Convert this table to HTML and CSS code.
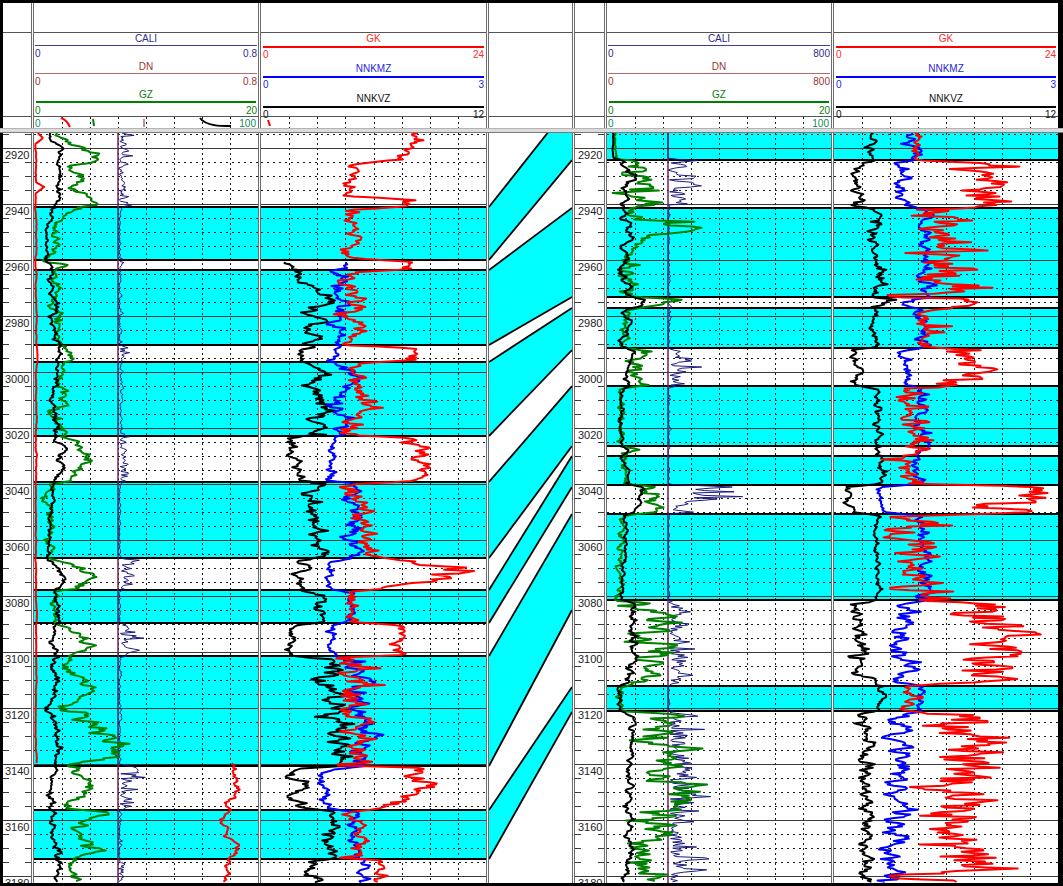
FILE: index.html
```html
<!DOCTYPE html>
<html lang="en">
<head>
<meta charset="utf-8">
<title>Well log correlation</title>
<link rel="stylesheet" href="styles.css">
</head>
<body>
<div class="page">
  <div class="edge"></div>

  <div class="pane head">
    <div class="col w-d1"><div class="r1"></div><div class="r2"></div><div class="r3"></div></div>
    <div class="sep"></div>

    <div class="col w-t1">
      <div class="r1"></div>
      <div class="r2">
        <div class="scale">
          <div class="name cali">CALI</div>
          <div class="bar bar-cali"></div>
          <div class="range cali"><span>0</span><span>0.8</span></div>
        </div>
        <div class="scale">
          <div class="name dn">DN</div>
          <div class="bar bar-dn"></div>
          <div class="range dn"><span>0</span><span>0.8</span></div>
        </div>
        <div class="scale">
          <div class="name gz">GZ</div>
          <div class="bar bar-gz thick"></div>
          <div class="range gz"><span>0</span><span>20</span></div>
        </div>
      </div>
      <div class="r3">
        <svg class="ruler" id="ru1" width="224" height="11"><text class="rl" x="1" y="9.5">0</text><text class="rl" x="222" y="9.5" text-anchor="end">100</text></svg>
      </div>
    </div>
    <div class="sep"></div>

    <div class="col w-t2">
      <div class="r1"></div>
      <div class="r2">
        <div class="scale tall">
          <div class="name gk">GK</div>
          <div class="bar bar-gk"></div>
          <div class="range gk"><span>0</span><span>24</span></div>
        </div>
        <div class="scale tall">
          <div class="name nnkmz">NNKMZ</div>
          <div class="bar bar-nnkmz"></div>
          <div class="range nnkmz"><span>0</span><span>3</span></div>
        </div>
        <div class="scale tall">
          <div class="name nnkvz">NNKVZ</div>
          <div class="bar bar-nnkvz"></div>
          <div class="range nnkvz"><span>0</span><span>12</span></div>
        </div>
      </div>
      <div class="r3">
        <svg class="ruler" id="ru2" width="225" height="11"></svg>
      </div>
    </div>
    <div class="sep"></div>

    <div class="col w-cr"><div class="r1"></div><div class="r2"></div><div class="r3"></div></div>
    <div class="sep"></div>

    <div class="col w-d2"><div class="r1"></div><div class="r2"></div><div class="r3"></div></div>
    <div class="sep"></div>

    <div class="col w-t3">
      <div class="r1"></div>
      <div class="r2">
        <div class="scale">
          <div class="name cali">CALI</div>
          <div class="bar bar-cali"></div>
          <div class="range cali"><span>0</span><span>800</span></div>
        </div>
        <div class="scale">
          <div class="name dn">DN</div>
          <div class="bar bar-dn"></div>
          <div class="range dn"><span>0</span><span>800</span></div>
        </div>
        <div class="scale">
          <div class="name gz">GZ</div>
          <div class="bar bar-gz thick"></div>
          <div class="range gz"><span>0</span><span>20</span></div>
        </div>
      </div>
      <div class="r3">
        <svg class="ruler" id="ru3" width="224" height="11"><text class="rl" x="1" y="9.5">0</text><text class="rl" x="222" y="9.5" text-anchor="end">100</text></svg>
      </div>
    </div>
    <div class="sep"></div>

    <div class="col w-t4">
      <div class="r1"></div>
      <div class="r2">
        <div class="scale tall">
          <div class="name gk">GK</div>
          <div class="bar bar-gk"></div>
          <div class="range gk"><span>0</span><span>24</span></div>
        </div>
        <div class="scale tall">
          <div class="name nnkmz">NNKMZ</div>
          <div class="bar bar-nnkmz"></div>
          <div class="range nnkmz"><span>0</span><span>3</span></div>
        </div>
        <div class="scale tall">
          <div class="name nnkvz">NNKVZ</div>
          <div class="bar bar-nnkvz"></div>
          <div class="range nnkvz"><span>0</span><span>12</span></div>
        </div>
      </div>
      <div class="r3">
        <svg class="ruler" id="ru4" width="224" height="11"></svg>
      </div>
    </div>
  </div>

  <div class="splitter"></div>

  <div class="pane data">
    <svg class="cell" id="d1" width="28" height="750"></svg>
    <div class="sep"></div>
    <svg class="cell" id="t1" width="224" height="750"></svg>
    <div class="sep"></div>
    <svg class="cell" id="t2" width="225" height="750"></svg>
    <div class="sep"></div>
    <svg class="cell" id="corr" width="83" height="750"></svg>
    <div class="sep"></div>
    <svg class="cell" id="d2" width="29" height="750"></svg>
    <div class="sep"></div>
    <svg class="cell" id="t3" width="224" height="750"></svg>
    <div class="sep"></div>
    <svg class="cell" id="t4" width="224" height="750"></svg>
  </div>

  <div class="edge"></div>
</div>
<script src="script.js"></script>
</body>
</html>
```

FILE: styles.css
```css
* { box-sizing: border-box; }
html, body { margin: 0; padding: 0; background: #fff; }
body { font-family: "Liberation Sans", Arial, sans-serif; font-size: 10px; }

.page { width: 1063px; height: 886px; display: flex; flex-direction: column; overflow: hidden; background: #000; }
.edge { height: 3px; flex: none; background: #000; }
.pane { display: flex; flex: none; background: #fff; border-left: 3px solid #000; border-right: 5px solid #000; }
.head { height: 125px; }
.data { height: 750px; }
.splitter { height: 5px; flex: none; background: #dcdcdc; border-top: 1px solid #b4b4b4; border-bottom: 1px solid #7a7a7a; }

.sep { flex: none; width: 3px; background: #fff; border-left: 1px solid #6c6c6c; border-right: 1px solid #6c6c6c; }
.col { flex: none; display: flex; flex-direction: column; }
.w-d1 { width: 28px; }
.w-t1 { width: 224px; }
.w-t2 { width: 225px; }
.w-cr { width: 83px; }
.w-d2 { width: 29px; }
.w-t3 { width: 224px; }
.w-t4 { width: 224px; }

.r1 { height: 30px; border-bottom: 1px solid #555; }
.r2 { height: 84px; border-bottom: 1px solid #555; }
.r3 { height: 11px; }

.scale { height: 28px; }
.scale.tall { height: 30px; }
.name { height: 11px; line-height: 11px; text-align: center; white-space: nowrap; }
.bar { height: 1px; margin: 1px 1px 0; }
.bar.thick { height: 2px; margin: 1px 2px 0; }
.tall .bar { height: 2px; margin: 2px 2px 0; }
.range { display: flex; justify-content: space-between; line-height: 15px; padding: 0 1px; }
.tall .range { line-height: 14px; padding: 0 2px; }

.cali { color: #2e2e88; }
.dn { color: #9c3434; }
.gz { color: #0a800a; }
.gk { color: #ff2a2a; }
.nnkmz { color: #2626dc; }
.nnkvz { color: #111; }
.bar-cali { background: #3e3e92; }
.bar-dn { background: #b86a6a; }
.bar-gz { background: #008000; }
.bar-gk { background: #ff0000; }
.bar-nnkmz { background: #0000ff; }
.bar-nnkvz { background: #000; }

.ruler { display: block; }
.rl { font-family: "Liberation Sans", Arial, sans-serif; font-size: 10px; fill: #0f8a5a; }

.cell { display: block; flex: none; background: #fff; }
.dlabel { font-family: "Liberation Sans", Arial, sans-serif; font-size: 11px; fill: #222; }
```

FILE: script.js
```js
(function () {
  var TOP = 133, H = 750;
  function Y(d) { return 148 + (d - 2920) * 2.8 - TOP; }
  function py(v) { return Math.round(v) + 0.5; }

  function rng(seed) {
    return function () {
      seed = (seed + 0x6D2B79F5) | 0;
      var t = Math.imul(seed ^ (seed >>> 15), 1 | seed);
      t = (t + Math.imul(t ^ (t >>> 7), 61 | t)) ^ t;
      return ((t ^ (t >>> 14)) >>> 0) / 4294967296;
    };
  }
  function gauss(r) {
    var u = r() || 1e-9, v = r();
    return Math.sqrt(-2 * Math.log(u)) * Math.cos(2 * Math.PI * v);
  }
  function line(x1, y1, x2, y2, stroke, width, dash) {
    return '<line x1="' + x1 + '" y1="' + y1 + '" x2="' + x2 + '" y2="' + y2 + '" stroke="' + stroke +
      '" stroke-width="' + (width || 1) + '"' + (dash ? ' stroke-dasharray="' + dash + '"' : '') + '/>';
  }

  function curvePath(c, left, w) {
    var r = rng(c.seed), n = 0, rho = c.rho, k = c.keys, i = 0, pts = [];
    var step = c.step || 1.2;
    var endY = k[k.length - 1][0];
    for (var y = k[0][0]; y <= endY; y += step) {
      while (i < k.length - 2 && k[i + 1][0] <= y) i++;
      var a = k[i], b = k[i + 1];
      var t = b[0] > a[0] ? Math.min(1, Math.max(0, (y - a[0]) / (b[0] - a[0]))) : 1;
      var base = a[1] + (b[1] - a[1]) * t;
      var amp = a[2] + (b[2] - a[2]) * t;
      n = rho * n + Math.sqrt(1 - rho * rho) * gauss(r);
      var off = c.oneSided ? Math.abs(n) * amp : n * amp;
      var x = base + off - left;
      if (x < 0.5) x = 0.5;
      if (x > w - 0.5) x = w - 0.5;
      pts.push(x.toFixed(1) + ',' + (y - TOP).toFixed(1));
    }
    return '<path d="M' + pts.join('L') + '" fill="none" stroke="' + c.color + '" stroke-width="' +
      (c.width || 2) + '" stroke-linejoin="round"/>';
  }

  function depthTrack(id, w, tx) {
    var el = document.getElementById(id), s = '';
    for (var d = 2910; d <= 3185; d += 5) {
      var y = py(Y(d));
      if (y < 0 || y > H) continue;
      if (d % 20 === 0) {
        s += line(0, y, w, y, '#3c3c3c', 1);
        s += '<text class="dlabel" x="' + tx + '" y="' + (y + 10.5) + '">' + d + '</text>';
      } else {
        s += line(0, y, 6, y, '#3c3c3c', 1) + line(w - 6, y, w, y, '#3c3c3c', 1);
      }
    }
    el.innerHTML = s;
  }

  function track(id, left, w, zones, curves, verticals) {
    var el = document.getElementById(id), s = '';
    zones.forEach(function (z) {
      s += '<rect x="0" y="' + (z[0] - TOP) + '" width="' + w + '" height="' + (z[1] - z[0]) + '" fill="#00ffff"/>';
    });
    for (var d = 2910; d <= 3185; d += 5) {
      var y = py(Y(d));
      if (y < 0 || y > H) continue;
      s += d % 20 === 0 ? line(0, y, w, y, '#3a3a3a', 1) : line(0, y, w, y, '#1e1e1e', 1, '2 4');
    }
    for (var k = 1; k < 8; k++) {
      var x = Math.round(k * w / 8) + 0.5;
      s += line(x, 0, x, H, '#1e1e1e', 1, '2 3');
    }
    zones.forEach(function (z) {
      s += line(0, z[0] - TOP, w, z[0] - TOP, '#000', 2) + line(0, z[1] - TOP, w, z[1] - TOP, '#000', 2);
    });
    (verticals || []).forEach(function (v) {
      s += line(v - left, 0, v - left, H, '#70205a', 1.5);
    });
    curves.forEach(function (c) { s += curvePath(c, left, w); });
    el.innerHTML = s;
  }

  function ruler(id, w, frag) {
    var el = document.getElementById(id), s = '';
    for (var k = 1; k < 8; k++) {
      var x = Math.round(k * w / 8) + 0.5;
      s += line(x, 0, x, 11, '#1e1e1e', 1, '2 3');
    }
    el.innerHTML = s + (frag || '') + el.innerHTML;
  }

  var RED = '#ff0000', BLUE = '#0000ff', BLACK = '#000000', GREEN = '#008000', NAVY = '#1c1c7e';

  /* ---------- left well ---------- */
  var zonesL = [[207, 260], [270, 345], [362, 436], [482, 558], [590, 623], [656, 766], [810, 859]];

  var t1Curves = [
    { seed: 11, rho: 0.9, color: RED, width: 2, keys: [[133, 38, 0.5], [138, 44, 0.5], [144, 36, 0.5], [182, 36, 0.5], [187, 44, 0.5], [193, 36, 0.5], [764, 36, 0.3]] },
    { seed: 12, rho: 0.85, color: RED, width: 2, keys: [[763, 232, 0.5], [770, 230, 3], [790, 237, 3], [805, 228, 3], [820, 222, 3], [840, 234, 3], [860, 230, 3], [883, 229, 3]] },
    { seed: 13, rho: 0.5, color: NAVY, width: 1, oneSided: true, keys: [[133, 119, 5], [205, 119, 5], [208, 119, 1.5], [262, 119, 1.5], [264, 119, 8], [270, 119, 1.5], [345, 119, 1.5], [347, 120, 7], [362, 120, 1.5], [431, 120, 1.5], [436, 120, 5], [481, 120, 4], [484, 119, 1.2], [558, 119, 1.2], [562, 120, 11], [588, 120, 6], [592, 119, 1.2], [622, 119, 1.2], [626, 120, 14], [655, 120, 8], [658, 119, 1.2], [765, 119, 1.2], [770, 120, 14], [808, 120, 6], [811, 119, 1.2], [860, 119, 1.2], [864, 119, 3], [883, 119, 3]] },
    { seed: 14, rho: 0.75, color: GREEN, width: 2, keys: [[133, 58, 2], [142, 66, 4], [152, 88, 6], [160, 98, 4], [166, 72, 4], [176, 82, 5], [188, 74, 4], [198, 88, 4], [205, 96, 3], [210, 72, 4], [222, 56, 4], [262, 50, 3], [265, 75, 4], [270, 60, 4], [300, 55, 4], [345, 58, 4], [350, 72, 5], [362, 68, 3], [380, 62, 5], [410, 58, 5], [436, 62, 4], [445, 78, 6], [462, 90, 5], [481, 72, 4], [485, 50, 3], [558, 50, 3], [565, 75, 8], [578, 100, 6], [588, 70, 5], [592, 52, 3], [623, 56, 3], [630, 72, 6], [645, 85, 6], [656, 70, 4], [665, 62, 6], [690, 85, 8], [720, 80, 10], [748, 120, 10], [760, 95, 8], [766, 70, 5], [785, 85, 6], [808, 70, 5], [812, 105, 6], [830, 70, 6], [850, 95, 8], [860, 72, 4], [883, 75, 4]] },
    { seed: 15, rho: 0.85, color: BLACK, width: 2, keys: [[133, 52, 2], [150, 60, 3], [165, 56, 3], [180, 60, 3], [200, 58, 3], [210, 52, 3], [230, 46, 2], [262, 47, 2], [266, 52, 2], [300, 55, 3], [340, 55, 3], [352, 60, 3], [362, 56, 3], [400, 52, 3], [432, 58, 3], [445, 66, 3], [470, 62, 3], [485, 54, 2], [520, 50, 2], [555, 52, 2], [570, 60, 3], [590, 57, 3], [625, 60, 3], [640, 56, 3], [680, 52, 3], [720, 56, 4], [760, 60, 4], [775, 54, 3], [800, 52, 3], [815, 58, 3], [840, 55, 3], [860, 57, 3], [883, 58, 3]] }
  ];

  var t2Curves = [
    { seed: 21, rho: 0.65, color: BLACK, width: 2, keys: [[262, 288, 3], [270, 298, 5], [300, 318, 7], [345, 312, 8], [350, 300, 4], [362, 305, 4], [366, 316, 7], [435, 320, 7], [438, 292, 4], [480, 296, 4], [484, 315, 7], [558, 320, 7], [562, 300, 5], [590, 306, 4], [593, 322, 5], [622, 320, 5], [626, 292, 3], [656, 292, 3], [660, 330, 11], [766, 336, 11], [770, 295, 6], [808, 302, 6], [812, 330, 6], [858, 330, 6], [862, 306, 5], [883, 310, 5]] },
    { seed: 22, rho: 0.6, color: BLUE, width: 2, keys: [[262, 346, 2], [270, 340, 4], [345, 345, 6], [350, 334, 3], [362, 332, 3], [366, 345, 6], [435, 342, 6], [438, 332, 3], [480, 330, 3], [484, 350, 5], [558, 356, 6], [562, 328, 3], [590, 330, 3], [593, 355, 4], [622, 350, 4], [626, 333, 3], [656, 333, 3], [660, 356, 8], [766, 362, 8], [770, 324, 3], [808, 325, 3], [812, 355, 6], [858, 360, 6], [862, 362, 3], [883, 360, 3]] },
    { seed: 23, rho: 0.55, color: RED, width: 2, keys: [[133, 408, 6], [150, 412, 6], [160, 398, 5], [164, 352, 5], [196, 348, 5], [200, 405, 5], [206, 405, 4], [210, 352, 6], [258, 350, 6], [262, 410, 4], [269, 410, 4], [272, 352, 7], [345, 358, 7], [348, 412, 6], [353, 428, 7], [360, 410, 6], [364, 360, 7], [435, 352, 7], [438, 415, 6], [480, 418, 6], [484, 358, 7], [555, 362, 7], [560, 395, 11], [572, 455, 14], [580, 425, 10], [588, 385, 7], [592, 352, 5], [622, 352, 5], [626, 402, 5], [655, 402, 5], [658, 352, 9], [765, 355, 10], [768, 412, 7], [782, 425, 9], [806, 398, 6], [812, 355, 6], [858, 356, 7], [862, 378, 5], [883, 380, 5]] }
  ];

  /* ---------- right well ---------- */
  var zonesR = [[110, 160], [208, 297], [308, 348], [386, 446], [456, 485], [514, 600], [686, 711]];

  var t3Curves = [
    { seed: 31, rho: 0.5, color: NAVY, width: 1, oneSided: true, keys: [[133, 668, 0], [158, 668, 0], [162, 668, 15], [205, 668, 12], [208, 668, 1], [297, 668, 1], [300, 668, 8], [306, 668, 2], [345, 668, 1], [350, 670, 12], [385, 670, 10], [388, 668, 1], [484, 668, 1], [487, 690, 40], [497, 680, 25], [512, 670, 10], [515, 668, 1], [600, 668, 1], [605, 670, 12], [682, 670, 12], [686, 668, 1], [711, 668, 1], [714, 670, 14], [883, 670, 14]] },
    { seed: 32, rho: 0.6, color: GREEN, width: 2, keys: [[133, 615, 0.5], [158, 616, 0.5], [162, 640, 12], [205, 650, 15], [209, 625, 4], [220, 640, 12], [228, 700, 10], [236, 650, 6], [250, 630, 5], [297, 632, 5], [300, 680, 8], [306, 650, 4], [310, 625, 3], [347, 625, 3], [350, 642, 8], [385, 640, 6], [389, 620, 2], [446, 620, 2], [450, 640, 5], [456, 625, 3], [484, 625, 3], [487, 655, 8], [512, 650, 5], [516, 622, 2], [600, 620, 2], [605, 650, 12], [640, 662, 14], [682, 640, 8], [688, 620, 2], [711, 620, 2], [714, 655, 12], [800, 665, 15], [860, 650, 12], [883, 655, 10]] },
    { seed: 33, rho: 0.8, color: BLACK, width: 2, keys: [[133, 613, 0.5], [158, 613, 0.5], [162, 622, 3], [175, 632, 3], [190, 628, 3], [205, 622, 2], [210, 626, 3], [297, 628, 4], [300, 640, 3], [306, 640, 2], [310, 625, 3], [347, 622, 2], [350, 632, 3], [385, 628, 3], [389, 622, 2], [446, 622, 2], [450, 630, 2], [456, 625, 2], [484, 628, 3], [487, 640, 2], [512, 640, 2], [516, 625, 2], [600, 622, 2], [604, 630, 3], [682, 632, 4], [686, 620, 2], [711, 620, 2], [714, 630, 3], [883, 628, 3]] }
  ];

  var t4Curves = [
    { seed: 41, rho: 0.7, color: BLACK, width: 2, keys: [[133, 875, 4], [160, 875, 4], [163, 856, 4], [205, 858, 5], [210, 876, 4], [297, 878, 4], [300, 890, 4], [306, 885, 3], [310, 876, 3], [347, 875, 3], [350, 855, 4], [385, 855, 4], [389, 878, 3], [446, 878, 3], [456, 882, 3], [484, 880, 3], [487, 846, 3], [512, 850, 3], [516, 878, 2], [600, 878, 2], [604, 860, 5], [682, 860, 6], [686, 880, 3], [711, 880, 3], [714, 866, 5], [883, 866, 5]] },
    { seed: 42, rho: 0.6, color: BLUE, width: 2, keys: [[133, 915, 4], [160, 915, 4], [163, 900, 5], [205, 905, 5], [210, 925, 4], [297, 925, 5], [300, 910, 5], [306, 905, 3], [310, 920, 5], [347, 920, 5], [350, 905, 4], [385, 905, 4], [389, 922, 4], [446, 925, 4], [456, 915, 4], [484, 918, 4], [487, 880, 3], [512, 885, 3], [516, 925, 4], [600, 925, 4], [604, 900, 6], [682, 905, 8], [686, 920, 3], [711, 920, 3], [714, 900, 8], [883, 895, 8]] },
    { seed: 43, rho: 0.5, color: RED, width: 2, keys: [[133, 915, 3], [160, 915, 3], [163, 980, 18], [205, 990, 15], [210, 940, 22], [297, 950, 22], [300, 975, 12], [306, 970, 8], [310, 920, 10], [347, 925, 10], [350, 960, 14], [385, 960, 12], [389, 910, 10], [446, 910, 10], [450, 925, 5], [456, 910, 10], [484, 912, 10], [487, 1010, 18], [512, 1010, 15], [516, 915, 14], [600, 915, 14], [604, 990, 22], [640, 1020, 18], [682, 970, 20], [686, 905, 5], [711, 905, 5], [714, 960, 22], [883, 965, 22]] }
  ];

  var pairs = [
    [[207, 260], [102, 160]], [[270, 345], [208, 297]], [[362, 436], [308, 350]],
    [[482, 558], [386, 446]], [[590, 623], [456, 487]], [[656, 766], [514, 610]], [[810, 859], [687, 712]]
  ];

  function correlation() {
    var el = document.getElementById('corr'), w = 83, s = '';
    pairs.forEach(function (p) {
      var l0 = p[0][0] - TOP, l1 = p[0][1] - TOP, r0 = p[1][0] - TOP, r1 = p[1][1] - TOP;
      s += '<polygon points="0,' + l0 + ' ' + w + ',' + r0 + ' ' + w + ',' + r1 + ' 0,' + l1 + '" fill="#00ffff"/>';
      s += line(0, l0, w, r0, '#000', 1.8) + line(0, l1, w, r1, '#000', 1.8);
    });
    el.innerHTML = s;
  }

  depthTrack('d1', 28, 2);
  depthTrack('d2', 29, 3);
  track('t1', 34, 224, zonesL, t1Curves, [118]);
  track('t2', 261, 225, zonesL, t2Curves);
  track('t3', 607, 224, zonesR, t3Curves, [668]);
  track('t4', 834, 224, zonesR, t4Curves);
  correlation();

  ruler('ru1', 224,
    '<path d="M27,1 Q33,3 36,10" fill="none" stroke="#ff0000" stroke-width="2"/>' +
    '<path d="M59,2 L60,9" fill="none" stroke="#008000" stroke-width="2"/>' +
    '<path d="M110,2 L110,10" fill="none" stroke="#70205a" stroke-width="1"/>' +
    '<path d="M166,1 Q172,9 192,9 L197,9" fill="none" stroke="#000" stroke-width="2"/>');
  ruler('ru2', 225, '<path d="M7,3 L9,9" fill="none" stroke="#ff0000" stroke-width="2"/>');
  ruler('ru3', 224);
  ruler('ru4', 224);
})();
```
